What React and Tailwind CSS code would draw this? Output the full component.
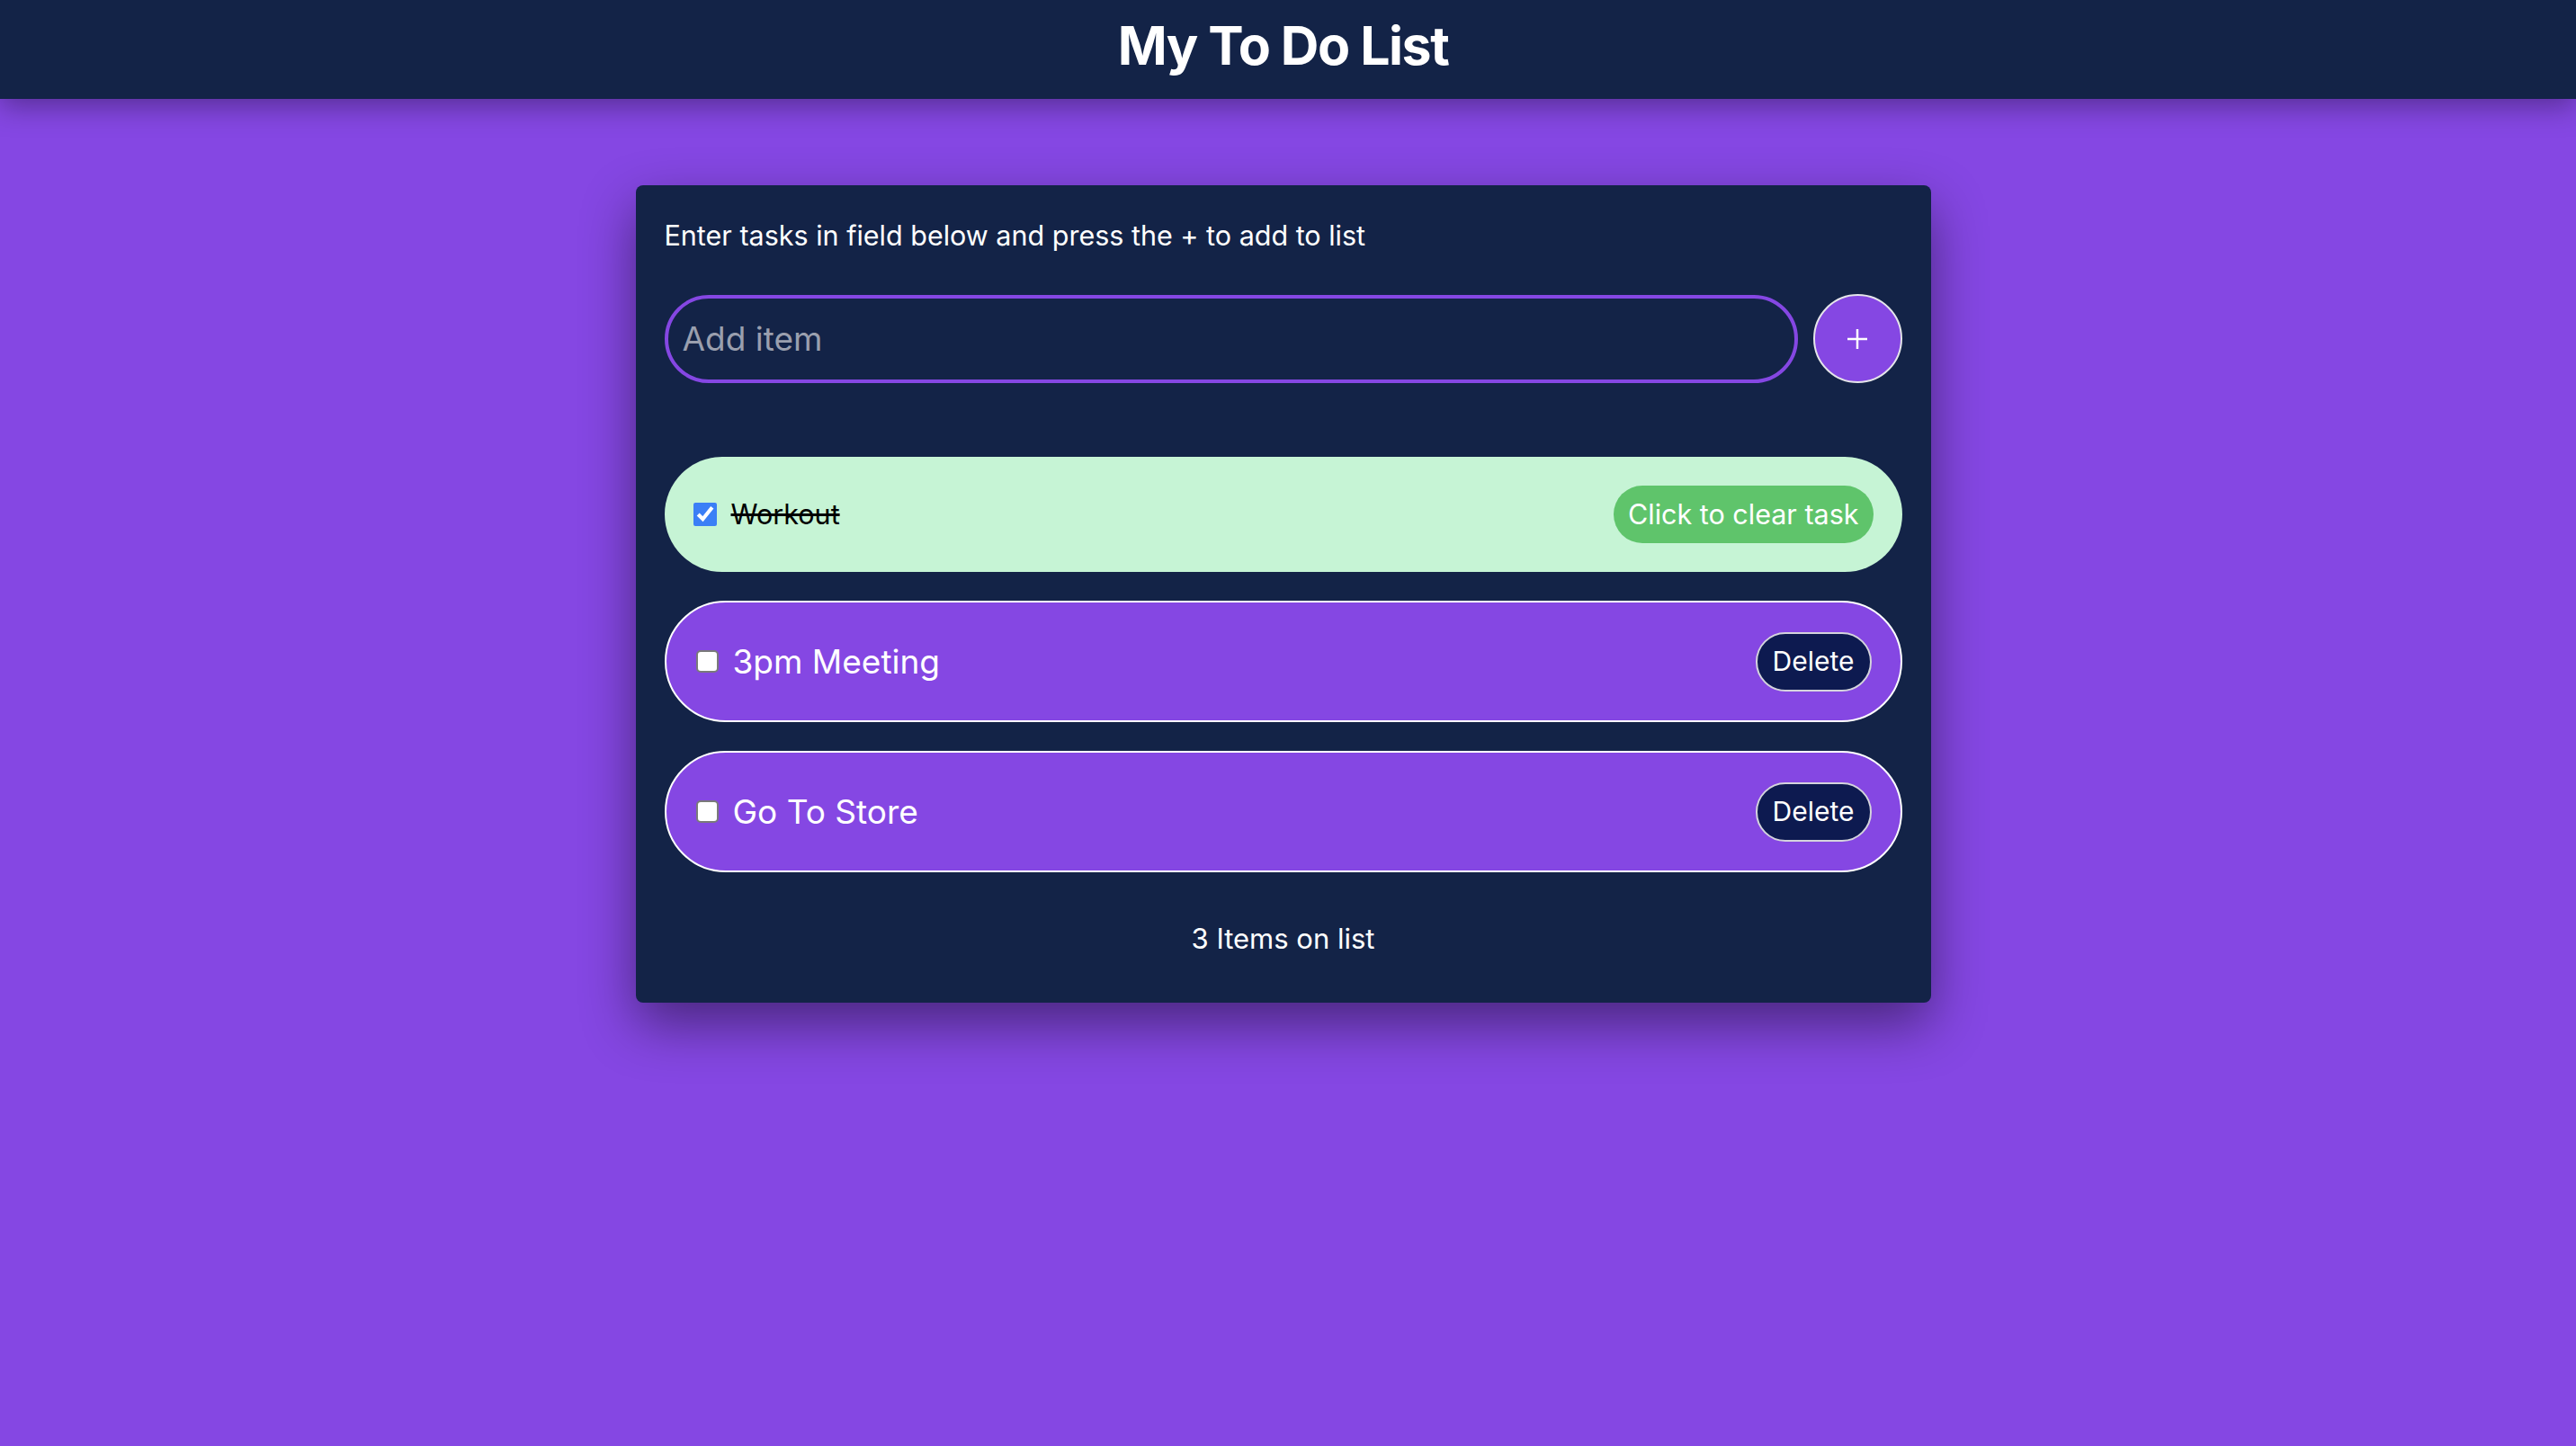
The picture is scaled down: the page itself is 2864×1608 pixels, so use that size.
import { useState } from "react";

const TASKS = [
  { id: 1, text: "Workout", done: true },
  { id: 2, text: "3pm Meeting", done: false },
  { id: 3, text: "Go To Store", done: false },
];

const TaskRow = ({ task }) => {
  if (task.done) {
    return (
      <li className="flex items-center h-[128px] px-8 rounded-full bg-[#c6f4d5]">
        <input
          type="checkbox"
          defaultChecked
          className="w-[26px] h-[26px] accent-[#3b7ff6] m-0"
        />
        <span className="ml-4 text-[30.5px] text-black line-through">{task.text}</span>
        <button className="ml-auto h-[64px] px-4 rounded-full bg-[#5fc46b] text-white text-[30.5px]">
          Click to clear task
        </button>
      </li>
    );
  }

  return (
    <li className="flex items-center h-[135px] px-8 rounded-full bg-[#8547e3] border-2 border-white">
      <input
        type="checkbox"
        className="appearance-none w-[25px] h-[25px] m-0 ml-[1px] bg-white border-2 border-[#7a7a7a] rounded-[5px]"
      />
      <span className="ml-4 text-[37px] text-white">{task.text}</span>
      <button className="ml-auto h-[66px] px-[17px] rounded-full bg-[#0d1a50] border-2 border-[#d4d4dc] text-white text-[30px]">
        Delete
      </button>
    </li>
  );
};

const App = () => {
  const [tasks] = useState(TASKS);

  return (
    <div className="min-h-screen bg-[#8547e3] font-['Inter',sans-serif]">
      {/* Barre du haut */}
      <header className="h-[110px] pr-[11px] pb-2 bg-[#132347] flex items-center justify-center shadow-[0_8px_30px_rgba(0,0,0,0.35)]">
        <h1 className="text-[59px] font-bold text-white tracking-tight">My To Do List</h1>
      </header>

      <main className="flex justify-center pt-24 pr-[11px]">
        <div className="w-[1440px] bg-[#132347] rounded-lg pt-8 px-8 pb-[47px] shadow-[0_24px_60px_rgba(0,0,0,0.45)]">
          <p className="text-[30.5px] leading-[48px] text-white">
            Enter tasks in field below and press the + to add to list
          </p>

          <div className="flex items-center gap-[17px] mt-[41px]">
            <input
              type="text"
              placeholder="Add item"
              className="flex-1 h-[98px] rounded-full border-4 border-[#8547e3] bg-[#132347] px-4 text-[37px] text-white placeholder:text-[#9a9fae] outline-none"
            />
            <button className="w-[99px] h-[99px] rounded-full bg-[#8547e3] border-2 border-[#e5e5ea] flex items-center justify-center">
              <svg width="24" height="24" viewBox="0 0 24 24" fill="none" stroke="white" strokeWidth="2.5">
                <line x1="12" y1="1" x2="12" y2="23" />
                <line x1="1" y1="12" x2="23" y2="12" />
              </svg>
            </button>
          </div>

          <ul className="flex flex-col gap-8 mt-[82px]">
            {tasks.map((task) => (
              <TaskRow key={task.id} task={task} />
            ))}
          </ul>

          <p className="mt-[50px] text-center text-[31px] leading-[48px] text-white">
            {tasks.length} Items on list
          </p>
        </div>
      </main>
    </div>
  );
};

export default App;
